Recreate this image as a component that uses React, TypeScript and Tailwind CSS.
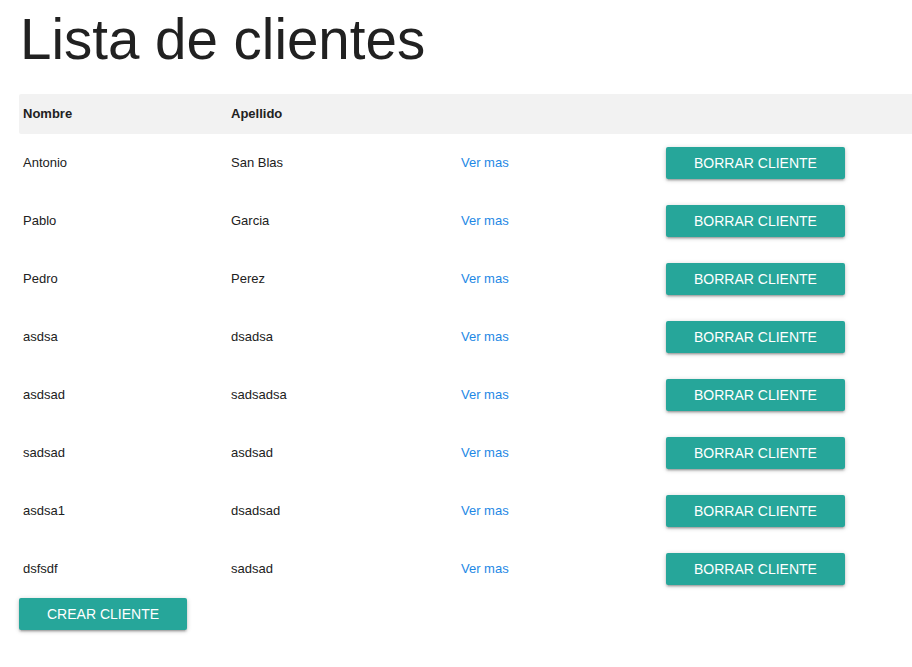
import React from "react";

const rows = [
  ["Antonio", "San Blas"],
  ["Pablo", "Garcia"],
  ["Pedro", "Perez"],
  ["asdsa", "dsadsa"],
  ["asdsad", "sadsadsa"],
  ["sadsad", "asdsad"],
  ["asdsa1", "dsadsad"],
  ["dsfsdf", "sadsad"],
];

const btn =
  "h-[32px] px-[28px] rounded-[2px] bg-[#26a69a] text-white text-[14px] uppercase leading-[32px] whitespace-nowrap shadow-[0_2px_2px_0_rgba(0,0,0,0.14),0_3px_1px_-2px_rgba(0,0,0,0.12),0_1px_5px_0_rgba(0,0,0,0.2)]";

export default function App() {
  return (
    <div
      className="min-h-[667px] bg-white text-[#212121] pl-[19px]"
      style={{ fontFamily: '"Liberation Sans", Arial, sans-serif' }}
    >
      <h1 className="text-[56.5px] leading-none pt-[12px] pl-px font-normal">
        Lista de clientes
      </h1>
      <div className="mt-[25px]">
        <div className="grid grid-cols-[208px_230px_205px_1fr] h-[40px] items-center bg-[#f2f2f2] rounded-l-[2px] text-[13px] font-bold">
          <div className="pl-[4px]">Nombre</div>
          <div className="pl-[4px]">Apellido</div>
          <div></div>
          <div></div>
        </div>
        {rows.map(([n, a]) => (
          <div
            key={n}
            className="grid grid-cols-[208px_230px_205px_1fr] h-[58px] items-center text-[13px]"
          >
            <div className="pl-[4px]">{n}</div>
            <div className="pl-[4px]">{a}</div>
            <div className="pl-[4px]">
              <a className="text-[#1e88e5] cursor-pointer">Ver mas</a>
            </div>
            <div className="pl-[4px]">
              <button className={btn}>Borrar cliente</button>
            </div>
          </div>
        ))}
      </div>
      <button className={btn}>Crear cliente</button>
    </div>
  );
}
